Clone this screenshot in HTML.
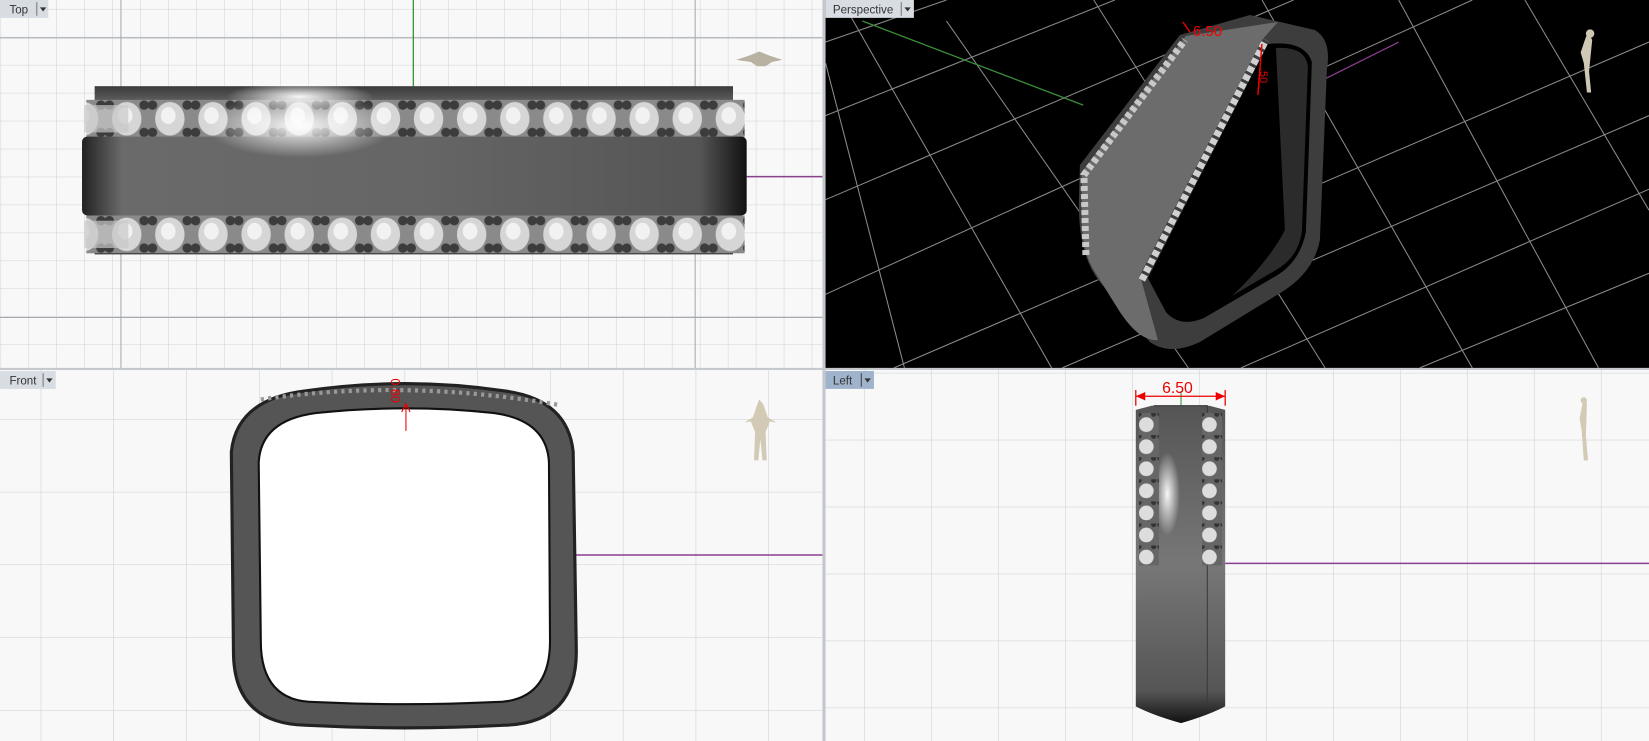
<!DOCTYPE html>
<html><head><meta charset="utf-8"><style>
html,body{margin:0;padding:0;background:#fff;overflow:hidden}
svg{display:block}
text{font-family:"Liberation Sans",sans-serif}
</style></head><body>
<svg width="1649" height="741" viewBox="0 0 1568 705" preserveAspectRatio="none" xmlns="http://www.w3.org/2000/svg">
<defs>
<pattern id="g27" width="26.6" height="26.6" patternUnits="userSpaceOnUse" x="1" y="9"><path d="M26.6 0V26.6M0 26.6H26.6" stroke="#cfd3d8" stroke-width="1" fill="none"/></pattern>
<pattern id="g69" width="69.2" height="69.2" patternUnits="userSpaceOnUse" x="-30" y="-16"><path d="M69.2 0V69.2M0 69.2H69.2" stroke="#c9cdd3" stroke-width="1" fill="none"/></pattern>
<pattern id="g64" width="63.7" height="63.7" patternUnits="userSpaceOnUse" x="-6" y="-27"><path d="M63.7 0V63.7M0 63.7H63.7" stroke="#c9cdd3" stroke-width="1" fill="none"/></pattern>
<linearGradient id="band" x1="0" y1="0" x2="0" y2="1"><stop offset="0" stop-color="#3a3a3a"/><stop offset=".15" stop-color="#777"/><stop offset=".5" stop-color="#5a5a5a"/><stop offset="1" stop-color="#2a2a2a"/></linearGradient>
<linearGradient id="bandx" x1="0" y1="0" x2="1" y2="0"><stop offset="0" stop-color="#222"/><stop offset=".06" stop-color="#6a6a6a"/><stop offset=".5" stop-color="#666"/><stop offset=".93" stop-color="#555"/><stop offset="1" stop-color="#111"/></linearGradient>
<radialGradient id="hl" cx=".5" cy=".5" r=".5"><stop offset="0" stop-color="#fff" stop-opacity=".95"/><stop offset="1" stop-color="#fff" stop-opacity="0"/></radialGradient>
<linearGradient id="lv" x1="0" y1="0" x2="0" y2="1"><stop offset="0" stop-color="#555"/><stop offset=".5" stop-color="#777"/><stop offset=".9" stop-color="#555"/><stop offset="1" stop-color="#111"/></linearGradient>
<g id="st"><rect width="41" height="36" fill="#8a8a8a"/><ellipse cx="20.5" cy="18" rx="14" ry="16" fill="#d6d6d6"/><ellipse cx="19" cy="15" rx="7" ry="8" fill="#f2f2f2"/><circle cx="-4" cy="5" r="4.5" fill="#3c3c3c"/><circle cx="4" cy="5" r="4.5" fill="#3c3c3c"/><circle cx="37" cy="5" r="4.5" fill="#3c3c3c"/><circle cx="45" cy="5" r="4.5" fill="#3c3c3c"/><circle cx="-4" cy="31" r="4.5" fill="#3c3c3c"/><circle cx="4" cy="31" r="4.5" fill="#3c3c3c"/><circle cx="37" cy="31" r="4.5" fill="#3c3c3c"/><circle cx="45" cy="31" r="4.5" fill="#3c3c3c"/></g>
<pattern id="s1" width="41" height="36" patternUnits="userSpaceOnUse" x="100" y="95"><use href="#st"/></pattern>
<pattern id="s2" width="41" height="36" patternUnits="userSpaceOnUse" x="100" y="205"><use href="#st"/></pattern>
<pattern id="vst" width="20" height="21" patternUnits="userSpaceOnUse" y="393"><rect width="20" height="21" fill="#666"/><circle cx="10" cy="11" r="7" fill="#ddd"/><circle cx="3" cy="1" r="2.5" fill="#333"/><circle cx="17" cy="1" r="2.5" fill="#333"/></pattern>
</defs>
<rect width="1568" height="705" fill="#c4c8cc"/>
<!-- TOP -->
<rect x="0" y="0" width="782" height="350" fill="#f8f8f8"/>
<rect x="0" y="0" width="782" height="350" fill="url(#g27)"/>
<path d="M0 36H782M0 302H782M115 0V350M661 0V350" stroke="#a6aab0" stroke-width="1"/>
<path d="M393 0V82" stroke="#2f8f2f" stroke-width="1.2"/>
<path d="M710 168H782" stroke="#8a3f8f" stroke-width="1.4"/>
<rect x="90" y="82" width="607" height="160" fill="url(#band)"/>
<rect x="82" y="95" width="626" height="36" fill="url(#s1)"/>
<rect x="82" y="205" width="626" height="36" fill="url(#s2)"/>
<rect x="80" y="100" width="42" height="26" fill="#c8c8c8" opacity=".7"/>
<rect x="80" y="210" width="42" height="26" fill="#c8c8c8" opacity=".7"/>
<rect x="78" y="130" width="632" height="75" rx="5" fill="url(#bandx)"/>
<ellipse cx="285" cy="120" rx="90" ry="30" fill="url(#hl)"/>
<ellipse cx="285" cy="92" rx="70" ry="14" fill="url(#hl)"/>
<path d="M700 57l12-4 10-4 10 4 12 4-10 2-6 4h-8l-6-4z" fill="#b8b2a2"/>
<rect x="0" y="0" width="46" height="17" fill="#d8dde3"/><text x="9" y="13" font-size="11" fill="#333">Top</text><path d="M35 2V15" stroke="#777"/><path d="M38 7h6l-3 4z" fill="#333"/>
<!-- PERSPECTIVE -->
<rect x="785" y="0" width="783" height="350" fill="#000"/>
<g stroke="#8a8a8a" stroke-width="1" fill="none">
<path d="M785 40L900 0M785 110L1060 0M785 190L1230 0M785 280L1400 0M850 350L1568 40M1010 350L1568 110M1180 350L1568 180M1350 350L1568 260"/>
<path d="M800 0L1000 350M900 20L1130 350M1040 0L1260 350M1200 0L1400 350M1330 0L1520 350M1450 0L1568 200M785 60L860 350"/>
</g>
<path d="M820 20L1030 100" stroke="#3a8f3a" stroke-width="1.2"/>
<path d="M1250 80L1330 40" stroke="#8a3f8f" stroke-width="1.2"/>
<g transform="scale(0.9508 0.9514)">
<path d="M1080 165L1180 35L1250 15L1315 30Q1332 40 1327 70L1320 240Q1314 272 1282 292L1200 342Q1170 356 1150 342L1100 282Q1078 255 1079 200Z" fill="#3d3d3d"/>
<path d="M1082 172L1186 36L1278 22L1262 40L1140 275L1158 340Q1140 342 1120 312L1095 272Q1080 250 1082 205Z" fill="#6c6c6c"/>
<path d="M1148 278L1268 44Q1305 40 1312 62L1306 232Q1300 262 1276 276L1204 318Q1180 328 1166 312Z" fill="#000"/>
<path d="M1276 48Q1305 46 1308 66L1302 232Q1298 258 1276 270L1232 296Q1270 260 1285 230Z" fill="#2b2b2b"/>
<path d="M1086 255L1084 175L1185 40" stroke="#c8c8c8" stroke-width="7" fill="none" stroke-dasharray="5 3"/>
<path d="M1142 280L1266 40" stroke="#d0d0d0" stroke-width="7" fill="none" stroke-dasharray="6 3"/>
<text x="1193" y="36" font-size="15" fill="#e00">6.50</text>
<text x="1260" y="68" font-size="11" fill="#e00" transform="rotate(90 1260 68)">.50</text>
<path d="M1183 22L1190 32M1262 44L1258 95" stroke="#e00" stroke-width="1.5"/>
</g>
<path d="M1510 30l4 8-3 30 2 20h-4l-3-28-3-10 4-12z" fill="#cfc8b4"/><circle cx="1512" cy="32" r="4" fill="#cfc8b4"/>
<rect x="785" y="0" width="84" height="17" fill="#d8dde3"/><text x="792" y="13" font-size="11" fill="#333">Perspective</text><path d="M857 2V15" stroke="#777"/><path d="M860 7h6l-3 4z" fill="#333"/>
<!-- FRONT -->
<rect x="0" y="352" width="782" height="353" fill="#f8f8f8"/>
<rect x="0" y="352" width="782" height="353" fill="url(#g69)"/>
<path d="M384 392V528" stroke="#2f8f2f" stroke-width="1.2"/>
<path d="M384 528H782" stroke="#8a3f8f" stroke-width="1.4"/>
<path d="M290 372Q385 358 480 372Q540 380 545 430L548 620Q548 688 480 690Q385 695 290 690Q222 688 222 620L220 430Q225 380 290 372Z" fill="#555" stroke="#222" stroke-width="3"/>
<path d="M300 393Q385 384 470 393Q520 400 522 440L523 610Q523 668 470 668Q385 672 300 668Q248 668 248 610L246 440Q248 400 300 393Z" fill="#fff" stroke="#111" stroke-width="2"/>
<path d="M248 380Q385 360 530 385" stroke="#999" stroke-width="4" fill="none" stroke-dasharray="3 4"/>
<text x="372" y="360" font-size="12" fill="#e00" transform="rotate(90 372 360)">0.80</text><path d="M386 385V410M382 392l4-8 4 8" stroke="#e00" fill="none"/>
<path d="M722 380l4 5 4 12 8 5-6-1-4 10 1 27h-4l-2-20-2 20h-4l1-27-4-10-6 1 8-5 4-12z" fill="#d2cab4"/>
<rect x="0" y="353" width="53" height="17" fill="#d8dde3"/><text x="9" y="366" font-size="11" fill="#333">Front</text><path d="M41 355V368" stroke="#777"/><path d="M44 360h6l-3 4z" fill="#333"/>
<!-- LEFT -->
<rect x="785" y="352" width="783" height="353" fill="#f8f8f8"/>
<rect x="785" y="352" width="783" height="353" fill="url(#g64)"/>
<path d="M1123 372V400" stroke="#2f8f2f" stroke-width="1"/>
<path d="M1165 536H1568" stroke="#8a3f8f" stroke-width="1.4"/>
<path d="M1080 390L1095 386H1150L1165 390V672Q1150 680 1123 688Q1095 680 1080 672Z" fill="url(#lv)"/>
<path d="M1097 386H1148V672" fill="none" stroke="#3a3a3a" stroke-width="1"/>
<ellipse cx="1110" cy="470" rx="12" ry="40" fill="url(#hl)"/>
<rect x="1083" y="393" width="19" height="145" fill="url(#vst)"/>
<rect x="1143" y="393" width="19" height="145" fill="url(#vst)"/>
<path d="M1080 377H1165M1080 371V386M1165 371V386" stroke="#e00" stroke-width="1.2"/><path d="M1080 377l9-4v8zM1165 377l-9-4v8z" fill="#e00"/>
<text x="1105" y="374" font-size="15" fill="#e00">6.50</text>
<path d="M1506 378l3 6-1 30 2 24h-4l-2-28-2-12z" fill="#d2cab4"/><circle cx="1506" cy="381" r="3" fill="#d2cab4"/>
<rect x="785" y="353" width="46" height="17" fill="#9fb3cc"/><text x="792" y="366" font-size="11" fill="#333">Left</text><path d="M819 355V368" stroke="#444"/><path d="M822 360h6l-3 4z" fill="#333"/>
</svg>
</body></html>
